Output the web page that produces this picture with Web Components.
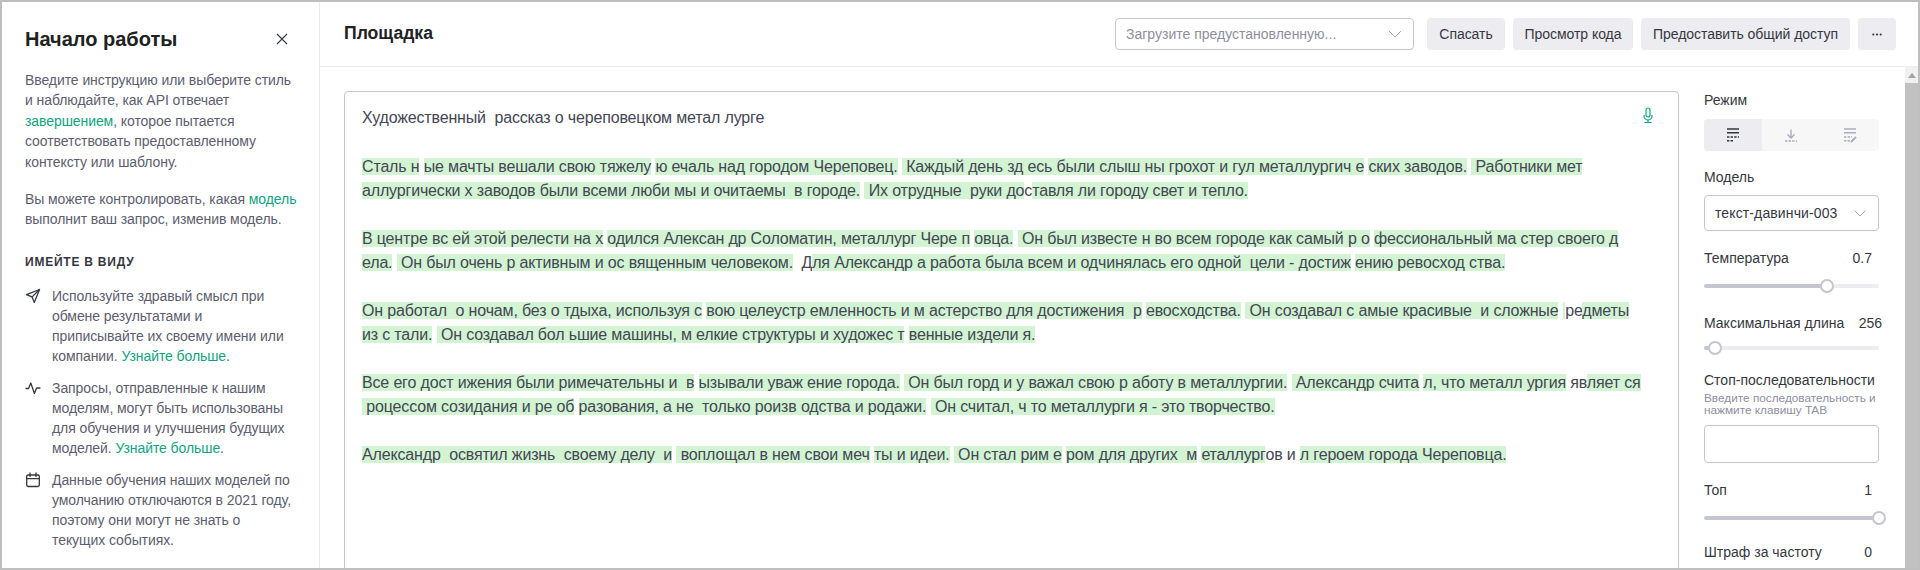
<!DOCTYPE html>
<html lang="ru"><head><meta charset="utf-8"><title>Площадка</title>
<style>
html,body{margin:0;padding:0;height:570px;overflow:hidden;background:#fff}
body{font-family:"Liberation Sans",Arial,sans-serif;color:#353740}
</style></head><body>
<x-app>
  <x-sidebar slot="side"></x-sidebar>
  <x-topbar slot="top"></x-topbar>
  <x-editor slot="editor"></x-editor>
  <x-settings slot="settings"></x-settings>
</x-app>
<script>
const IC={
 send:'<path d="M14.5 1.5 1.5 6.7l5.6 2.2 2.2 5.6z"/><path d="M14.5 1.5 7.1 8.9"/>',
 act:'<path d="M1 8.5h2.6L5.8 3l3.6 10.5L11.6 8H15"/>',
 cal:'<rect x="1.7" y="3" width="12.6" height="11.5" rx="1.4"/><path d="M1.7 6.6h12.6M5 1v3.4M11 1v3.4"/>'
};
function def(name,css,html,init){
  customElements.define(name,class extends HTMLElement{
    constructor(){super();const r=this.attachShadow({mode:'open'});
      r.innerHTML='<style>'+css+'</style>'+(typeof html==='function'?html(this):html);}
    connectedCallback(){if(init)init(this,this.shadowRoot)}
  });
}
def('x-app',`
:host{display:grid;box-sizing:border-box;width:1920px;height:570px;border:2px solid #bfbfbf;overflow:hidden;
 grid-template-columns:318px 1fr;grid-template-rows:65px 1fr;background:#fff}
.s{grid-row:1/3;min-height:0;display:block;overflow:hidden}
.t{min-width:0}
.b{display:flex;min-height:0;overflow:hidden}
.sb{width:13px;flex:none;margin-left:26px;display:flex;flex-direction:column}
.up{height:16px;background:#f1f1f1;display:flex;align-items:center;justify-content:center}
.up i{border:4px solid transparent;border-top:0;border-bottom:5px solid #a3a3a3}
.th{flex:1;background:#c1c1c1}
`,`<div class="s"><slot name="side"></slot></div><div class="t"><slot name="top"></slot></div>
<div class="b"><slot name="editor"></slot><slot name="settings"></slot><div class="sb"><div class="up"><i></i></div><div class="th"></div></div></div>`);

def('x-sidebar',`
:host{display:block;box-sizing:border-box;width:318px;height:566px;border-right:1px solid #ececf1;padding:24px 22px 0 23px;
 font:14px/20.4px "Liberation Sans",Arial,sans-serif;color:#5c5d6e;white-space:nowrap;letter-spacing:-.08px}
.h{display:flex;justify-content:space-between;align-items:center;height:26px}
h1{margin:0;font-size:20px;font-weight:700;line-height:26px;color:#202123;letter-spacing:0}
.x{width:12px;height:12px;margin-right:9px;display:block}
p{margin:0}
.p1{margin-top:18px}.p2{margin-top:17px}
a{color:#10a37f;text-decoration:none}
h2{margin:22px 0 0;font-size:12px;font-weight:700;line-height:20px;letter-spacing:.77px;text-transform:uppercase;color:#353740}
.it{display:flex;gap:11px;line-height:20px;margin-top:12px}
.it svg{width:16px;height:16px;flex:none;margin-top:2px;fill:none;stroke:#353740;stroke-width:1.3;stroke-linejoin:round;stroke-linecap:round}
.it.l{margin-top:14px}
`,`<div class="h"><h1>Начало работы</h1><svg class="x" viewBox="0 0 12 12" fill="none" stroke="#353740" stroke-width="1.1"><path d="M1 1l10 10M11 1 1 11"/></svg></div>
<p class="p1">Введите инструкцию или выберите стиль<br>и наблюдайте, как API отвечает<br><a>завершением</a>, которое пытается<br>соответствовать предоставленному<br>контексту или шаблону.</p>
<p class="p2">Вы можете контролировать, какая <a>модель</a><br>выполнит ваш запрос, изменив модель.</p>
<h2>Имейте в виду</h2>
<div class="it l"><svg viewBox="0 0 16 16">${IC.send}</svg><div>Используйте здравый смысл при<br>обмене результатами и<br>приписывайте их своему имени или<br>компании. <a>Узнайте больше</a>.</div></div>
<div class="it"><svg viewBox="0 0 16 16">${IC.act}</svg><div>Запросы, отправленные к нашим<br>моделям, могут быть использованы<br>для обучения и улучшения будущих<br>моделей. <a>Узнайте больше</a>.</div></div>
<div class="it"><svg viewBox="0 0 16 16">${IC.cal}</svg><div>Данные обучения наших моделей по<br>умолчанию отключаются в 2021 году,<br>поэтому они могут не знать о<br>текущих событиях.</div></div>`);

def('x-topbar',`
:host{display:flex;box-sizing:border-box;height:65px;border-bottom:1px solid #ececf1;align-items:center;padding:0 22px 0 24px;gap:8px;
 font:14px/20px "Liberation Sans",Arial,sans-serif;color:#353740}
h2{margin:0 auto 2px 0;font-size:17.6px;font-weight:700;color:#202123}
.sel{box-sizing:border-box;width:299px;height:32px;border:1px solid #c5c5d2;border-radius:4px;display:flex;align-items:center;justify-content:space-between;padding:0 11px 0 10px;color:#8e8ea0;margin-right:5px}
.sel svg{width:14px;height:8px}
button{all:unset;box-sizing:border-box;height:32px;background:#ececf1;border-radius:4px;display:flex;align-items:center;justify-content:center;white-space:nowrap;letter-spacing:-.05px}
`,`<h2>Площадка</h2><div class="sel"><span>Загрузите предустановленную...</span><svg viewBox="0 0 14 8" fill="none" stroke="#a9a9b5" stroke-width="1"><path d="M1 1l6 6 6-6"/></svg></div>
<button style="width:78px">Спасать</button><button style="width:120px">Просмотр кода</button><button style="width:209px">Предоставить общий доступ</button><button style="width:38px"><svg width="10" height="3" viewBox="0 0 10 3" fill="#353740"><circle cx="1.3" cy="1.5" r="1.1"/><circle cx="5" cy="1.5" r="1.1"/><circle cx="8.7" cy="1.5" r="1.1"/></svg></button>`);

const LINES=[
"[Сталь н] [ые мачты вешали свою тяжелу] [ю ечаль над городом Череповец.] [ Каждый день зд есь были слыш ны грохот и гул металлургич е] [ских заводов.] [ Работники мет]",
"[аллургически х заводов были всеми люби мы и очитаемы  в городе.] [ Их отрудные  руки до]с[тавля ли городу свет и тепло.]",
"",
"[В центре вс ей этой релести на х] [одился Алексан др Соломатин, металлург Чере п] [овца.] [ Он был известе н во всем городе как самый р о] [фессиональный ма стер своего д]",
"[ела.] [ Он был очень р активным и ос вященным человеком.]  Д[ля Александр а работа была всем и одчинялась его одной  цели - достиж] [ению ревосход ства.]",
"",
"[Он работал  о ночам, без о тдыха, используя с] [вою целеустр емленность и м астерство для достижения  р] [евосходства.] [ Он создавал с амые красивые  и сложные] [ ]ре[дметы]",
"[из с тали.] [ Он создавал бол ьшие машины, м елкие структуры и художес т] [венные издели я.]",
"",
"[Все его дост ижения были римечательны и  в] [ызывали уваж ение города.] [ Он был горд и у важал свою р аботу в металлургии.] [ Александр счита] [л, что металл ургия] яв[ляет ся]",
"[ роцессом созидания и ре об] [разования, а не  только роизв одства и родажи.] [ Он считал, ч то металлурги я - это творчество.]",
"",
"[Александр  освятил жизнь  своему делу  и] [ воплощал в нем свои меч] [ты и идеи.] [ Он стал рим е] [ром для других  м] [еталлург]ов и [л героем города Череповца.]"
];
def('x-editor',`
:host{display:block;position:relative;box-sizing:border-box;flex:none;width:1335px;margin:24px 0 0 24px;height:520px;border:1px solid #c5c5d2;border-radius:4px;padding:14px 17px;
 font:16px/24px "Liberation Sans",Arial,sans-serif;color:#444654;white-space:pre;letter-spacing:-.16px}
.l{height:24px}
mark{background:#d2f4d3;color:inherit}
mark.t{letter-spacing:-2px}
.gap{height:25px}
.mic{position:absolute;right:23px;top:15px;width:14px;height:17px;fill:none;stroke:#10a37f;stroke-width:1.2}
`,()=>{
 const esc=s=>s.replace(/\[ \]/g,'<mark class="t"> </mark>').replace(/\[([^\]]*)\]/g,'<mark>$1</mark>');
 return `<svg class="mic" viewBox="0 0 14 17"><rect x="5" y="1" width="4" height="9" rx="2"/><path d="M3 8v1a4 4 0 0 0 8 0V8M7 13v2.5M3.5 15.5h7"/></svg>`+
 `<div class="l">Художественный  рассказ о череповецком метал лурге</div><div class="gap"></div>`+LINES.map(l=>`<div class="l">${esc(l)}</div>`).join('');
});

def('x-slider',`
:host{display:block;height:16px;position:relative}
.t{position:absolute;left:0;right:0;top:6px;height:4px;border-radius:2px;background:#ececf1;overflow:hidden}
.f{height:4px;background:#c5c5d2}
.k{position:absolute;top:1px;box-sizing:border-box;width:14px;height:14px;margin-left:-7px;border-radius:50%;background:#fff;border:2px solid #c5c5d2}
`,h=>`<div class="t"><div class="f" style="width:${h.getAttribute('v')}%"></div></div><div class="k" style="left:${h.getAttribute('v')}%"></div>`);

def('x-settings',`
:host{display:block;box-sizing:border-box;flex:none;width:175px;margin-left:25px;padding-top:23px;font:14px/20px "Liberation Sans",Arial,sans-serif;color:#353740}
.lb{display:flex;justify-content:space-between;padding-right:7px;height:20px;white-space:nowrap}
.seg{display:flex;height:32px;background:#f7f7f8;border-radius:4px;margin-top:9px}
.seg div{flex:1;display:flex;align-items:center;justify-content:center;border-radius:4px 0 0 4px}
.seg .on{background:#ececf1}
.seg svg{width:16px;height:16px;fill:none;stroke-width:1.6}
.sel{box-sizing:border-box;height:36px;border:1px solid #c5c5d2;border-radius:4px;margin-top:8px;display:flex;align-items:center;justify-content:space-between;padding:0 12px 0 10px;letter-spacing:.12px}
.sel svg{width:12px;height:7px}
x-slider{margin-top:10px}
.hint{font-size:11.8px;line-height:12px;color:#8e8ea0;margin-top:2px;white-space:nowrap}
.box{box-sizing:border-box;height:38px;border:1px solid #c5c5d2;border-radius:4px;margin-top:9px}
`,`<div class="lb">Режим</div>
<div class="seg"><div class="on"><svg viewBox="0 0 16 16" stroke="#353740"><path d="M2 2h12M2 5.7h12"/><path d="M2 10h12M2 13.7h6" stroke-dasharray="2.4 1.2"/></svg></div>
<div><svg viewBox="0 0 16 16" stroke="#acacbe"><path d="M8 2.5v8M4.5 7.5 8 11l3.5-3.5" stroke-width="1.4"/><path d="M2 14h12" stroke-dasharray="2.4 1.2"/></svg></div>
<div><svg viewBox="0 0 16 16" stroke="#acacbe"><path d="M2 2h12M2 5.7h12"/><path d="M2 10h8M2 13.7h6" stroke-dasharray="2.4 1.2"/><path d="M9 15l5-5" stroke-width="2"/></svg></div></div>
<div class="lb" style="margin-top:16px">Модель</div>
<div class="sel"><span>текст-давинчи-003</span><svg viewBox="0 0 12 7" fill="none" stroke="#a9a9b5"><path d="M.7.7 6 6 11.3.7"/></svg></div>
<div class="lb" style="margin-top:17px"><span>Температура</span><span>0.7</span></div>
<x-slider v="70"></x-slider>
<div class="lb" style="margin-top:19px"><span>Максимальная длина</span><span style="margin-right:-10px">256</span></div>
<x-slider v="6" style="margin-top:7px"></x-slider>
<div class="lb" style="margin-top:14px">Стоп-последовательности</div>
<div class="hint">Введите последовательность и<br>нажмите клавишу TAB</div>
<div class="box"></div>
<div class="lb" style="margin-top:17px"><span>Топ</span><span>1</span></div>
<x-slider v="100"></x-slider>
<div class="lb" style="margin-top:16px"><span>Штраф за частоту</span><span>0</span></div>`);
</script>
</body></html>
